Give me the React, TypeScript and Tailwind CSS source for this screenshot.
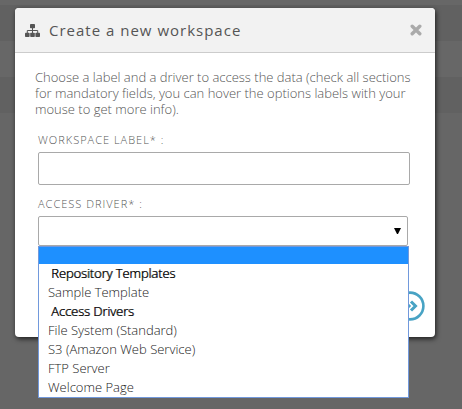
type Entry = { label: string; group?: boolean };

const entries: Entry[] = [
  { label: 'Repository Templates', group: true },
  { label: 'Sample Template' },
  { label: 'Access Drivers', group: true },
  { label: 'File System (Standard)' },
  { label: 'S3 (Amazon Web Service)' },
  { label: 'FTP Server' },
  { label: 'Welcome Page' },
];

function SitemapIcon() {
  return (
    <svg width="15" height="13" viewBox="0 0 15 13" fill="#555">
      <rect x="5" y="0" width="5" height="4.2" rx="0.8" />
      <rect x="0" y="8.8" width="4.6" height="4.2" rx="0.8" />
      <rect x="5.2" y="8.8" width="4.6" height="4.2" rx="0.8" />
      <rect x="10.4" y="8.8" width="4.6" height="4.2" rx="0.8" />
      <path d="M2.3 9V6.5H12.7V9M7.5 4V9" fill="none" stroke="#555" />
    </svg>
  );
}

function CloseIcon() {
  return (
    <svg width="12" height="12" viewBox="0 0 12 12" fill="none" stroke="#aaa" strokeWidth="3.4" strokeLinecap="round">
      <path d="M2.2 2.2L9.8 9.8M9.8 2.2L2.2 9.8" />
    </svg>
  );
}

function NextIcon() {
  return (
    <svg width="30" height="30" viewBox="0 0 30 30" fill="none" stroke="#48a3c4">
      <circle cx="15" cy="15" r="13.4" strokeWidth="2.6" />
      <path d="M9.5 10.5L14 15L9.5 19.5M16 10.5L20.5 15L16 19.5" strokeWidth="3" />
    </svg>
  );
}

function Options() {
  return (
    <div className="absolute top-[30px] left-0 h-[152px] w-[371px] border border-[#7299dc] bg-white text-[13px] font-light text-black">
      <div className="h-[17px] bg-[#1e90ff]" />
      {entries.map((e) => (
        <div
          key={e.label}
          className={
            e.group
              ? 'h-[19px] pl-[12px] leading-[19px] whitespace-nowrap tracking-[-0.1px] [text-shadow:0.6px_0_0_#000]'
              : 'h-[19px] pl-[9px] leading-[19px] whitespace-nowrap text-[#222]'
          }
        >
          {e.label}
        </div>
      ))}
    </div>
  );
}

export default function App() {
  return (
    <div className="flex h-[409px] w-[462px] items-start overflow-hidden bg-[linear-gradient(#676767_5px,#616161_5px,#616161_41px,#676767_41px,#676767_77px,#616161_77px,#616161_113px,#666_113px)] pt-2 pl-[15px] font-['Open_Sans','Noto_Sans',sans-serif]">
      <section className="flex h-[329px] w-[420px] flex-col rounded bg-white shadow-[1px_2px_5px_rgba(0,0,0,0.7)]">
        <header className="flex h-[45px] items-center rounded-t border-b border-[#ccc] bg-[#f2f2f2] pr-[13px] pl-[10px]">
          <SitemapIcon />
          <h1 className="ml-[9px] flex-1 text-[15px] leading-5 tracking-[1px] text-[#555]">Create a new workspace</h1>
          <CloseIcon />
        </header>
        <p className="mt-4 ml-5 h-12 text-[13px] leading-4 font-light whitespace-nowrap text-[#555]">
          Choose a label and a driver to access the data (check all sections
          <br />
          for mandatory fields, you can hover the options labels with your
          <br />
          mouse to get more info).
        </p>
        <div className="mt-[15px] ml-[23px] flex flex-col text-[11px] leading-4 font-light tracking-[1px] text-[#555]">
          <label>WORKSPACE LABEL* :</label>
          <div className="mt-1 h-[33px] w-[372px] rounded-xs border border-[#a9a9a9]" />
          <label className="mt-[11px]">ACCESS DRIVER* :</label>
          <div className="relative mt-1 flex h-[30px] w-[370px] items-center justify-end rounded-xs border border-[#a9a9a9] pr-[6px] tracking-normal">
            <svg width="7" height="6" viewBox="0 0 7 6">
              <path d="M0 0H7L4 6H3Z" />
            </svg>
            <div className="absolute -top-px -left-px z-10">
              <Options />
            </div>
          </div>
        </div>
        <div className="mt-[45px] flex justify-end pr-[10px]">
          <NextIcon />
        </div>
      </section>
    </div>
  );
}
